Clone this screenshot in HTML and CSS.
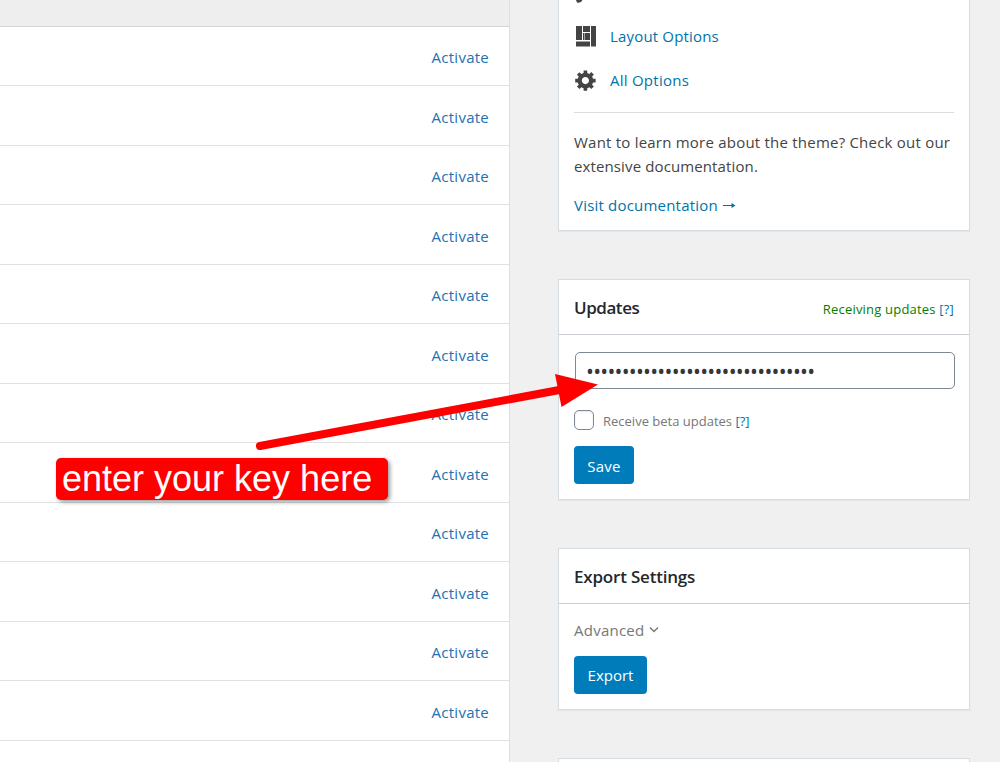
FILE: index.html
```html
<!DOCTYPE html>
<html lang="en">
<head>
<meta charset="utf-8">
<title>Theme options</title>
<link rel="stylesheet" href="styles.css">
</head>
<body>
<main class="page">
  <section class="table">
    <div class="table-head"></div>
    <div class="row"><a class="activate">Activate</a></div>
    <div class="row"><a class="activate">Activate</a></div>
    <div class="row"><a class="activate">Activate</a></div>
    <div class="row"><a class="activate">Activate</a></div>
    <div class="row"><a class="activate">Activate</a></div>
    <div class="row"><a class="activate">Activate</a></div>
    <div class="row"><a class="activate">Activate</a></div>
    <div class="row"><a class="activate">Activate</a></div>
    <div class="row"><a class="activate">Activate</a></div>
    <div class="row"><a class="activate">Activate</a></div>
    <div class="row"><a class="activate">Activate</a></div>
    <div class="row"><a class="activate">Activate</a></div>
    <div class="row"></div>
  </section>
  <aside class="side">
    <section class="panel options">
      <svg class="brush" width="24" height="4" viewBox="0 0 24 4"><path d="M2 0H8.500Q7 3.500 3 2.500Z" fill="#444"/></svg>
      <a class="option"><svg class="icon" width="24" height="24" viewBox="0 0 24 24"><path fill="#444" d="M2 2H8V16H2ZM9 2H16V8H9ZM9 9H10.500V16H9ZM11 9H16V16H11ZM17 2H22V22.500H17ZM2 17.500H16V22.500H2Z"/></svg><span class="link l-layout">Layout Options</span></a>
      <a class="option"><svg class="icon" width="24" height="24" viewBox="0 0 20 20"><path fill="#444" d="M18 12h-2.180c-.17.700-.440 1.350-.81 1.930l1.540 1.540-2.100 2.100-1.540-1.540c-.58.360-1.230.630-1.910.790V19H8v-2.180c-.68-.16-1.330-.43-1.910-.79l-1.540 1.540-2.120-2.120 1.540-1.540c-.36-.58-.63-1.230-.79-1.910H1V9.030h2.170c.160-.7.440-1.350.8-1.940L2.430 5.550l2.100-2.100 1.540 1.540c.58-.37 1.240-.64 1.930-.81V2h3v2.180c.68.160 1.330.430 1.910.79l1.540-1.540 2.120 2.120-1.540 1.540c.36.590.64 1.240.8 1.940H18V12zm-8.500 1.500c1.660 0 3-1.340 3-3s-1.340-3-3-3-3 1.340-3 3 1.340 3 3 3z"/></svg><span class="link l-all">All Options</span></a>
      <hr class="rule">
      <p class="copy"><span class="c1">Want to learn more about the theme? Check out our</span><br><span class="c2">extensive documentation.</span></p>
      <a class="link visit"><span class="l-visit">Visit documentation</span><svg class="arrow-icon" width="13" height="8" viewBox="0 0 13 8"><path d="M0 4.500H11" fill="none" stroke="#0073aa"/><path d="M8.500 2L12.500 4.500L8.500 7Z" fill="#0073aa"/></svg></a>
    </section>
    <section class="panel updates">
      <header class="panel-head"><h2 class="title t-up">Updates</h2><span class="status">Receiving updates <a class="help">[?]</a></span></header>
      <div class="key"><span class="dots">••••••••••••••••••••••••••••••••</span></div>
      <label class="beta"><span class="check"></span><span class="beta-text">Receive beta updates <a class="help">[?]</a></span></label>
      <button class="button save">Save</button>
    </section>
    <section class="panel export">
      <header class="panel-head"><h2 class="title t-ex">Export Settings</h2></header>
      <div class="advanced"><span class="adv-text">Advanced</span><svg width="10" height="8" viewBox="0 0 10 8"><path d="M1 1.500L5 5.500L9 1.500" fill="none" stroke="#777" stroke-width="1.400"/></svg></div>
      <button class="button exp">Export</button>
    </section>
    <section class="panel next"></section>
  </aside>
  <svg class="pointer" width="1000" height="762" viewBox="0 0 1000 762"><path d="M260 446L562 389.500" stroke="#f00" stroke-width="8" stroke-linecap="round"/><path d="M555 374L598 384.500L561.500 407Z" fill="#f00"/></svg>
  <div class="callout"><span class="callout-text">enter your key here</span></div>
</main>
</body>
</html>
```
FILE: styles.css
```css
* { box-sizing: border-box; }
body { margin: 0; background: #f0f0f0; font-family: "Open Sans", "Noto Sans", sans-serif; font-size: 15px; color: #444; }
.page { position: relative; display: flex; width: 1000px; height: 762px; overflow: hidden; }
.table { width: 510px; flex: none; background: #fff; border-right: 1px solid #dcdfe2; }
.table-head { height: 27px; background: #eee; border-bottom: 1px solid #d3d5d7; }
.row { height: 59.5px; border-bottom: 1px solid #e1e1e1; display: flex; justify-content: flex-end; align-items: center; padding: 3px 20px 0 0; }
.table-head + .row { height: 59px; padding-top: 2px; }
.activate { color: #2271b1; white-space: nowrap; letter-spacing: .25px; }
.side { width: 412px; margin-left: 48px; display: flex; flex-direction: column; gap: 48px; flex: none; }
.panel { background: #fff; border: 1px solid #d5dde3; box-shadow: 0 1px 1px rgba(0,0,0,.04); padding: 0 15px; flex: none; }
.options { height: 231px; border-top: 0; }
.brush { display: block; height: 4px; }
.option { display: flex; align-items: center; height: 44px; gap: 12px; }
.brush + .option { margin-top: 10px; }
.icon { flex: none; }
.link, .help { color: #0073aa; white-space: nowrap; }
.l-layout { letter-spacing: .17px; }
.l-all { letter-spacing: .25px; }
.l-visit { letter-spacing: .2px; }
.rule { margin: 10px 0 0; border: 0; border-top: 1px solid #ddd; }
.copy { margin: 17px 0 0; line-height: 24px; white-space: nowrap; }
.c1 { letter-spacing: .22px; }
.c2 { letter-spacing: .12px; }
.visit { display: flex; align-items: center; gap: 5px; margin-top: 15px; line-height: 24px; }
.updates { height: 221px; }
.panel-head { height: 55px; margin: 0 -15px; padding: 1px 15px 0; display: flex; align-items: center; justify-content: space-between; border-bottom: 1px solid #c9cfd4; }
.title { margin: 0; font-size: 17px; font-weight: 600; color: #23282d; white-space: nowrap; }
.t-up { letter-spacing: -.45px; }
.t-ex { letter-spacing: -.2px; }
.status { color: #008000; font-size: 13px; padding-top: 2px; white-space: nowrap; letter-spacing: .2px; }
.key { height: 37px; width: 380px; margin: 17px 0 0 1px; border: 1px solid #7e8993; border-radius: 5px; padding-left: 10px; display: flex; align-items: center; }
.dots { font-size: 21px; line-height: 20px; letter-spacing: -.76px; color: #32373c; white-space: nowrap; }
.beta { display: flex; align-items: center; gap: 9px; height: 20px; margin-top: 21px; }
.check { width: 20px; height: 20px; border: 1px solid #7e8993; border-radius: 5px; box-shadow: inset 0 1px 2px rgba(0,0,0,.1); }
.beta-text { color: #777; font-size: 13px; white-space: nowrap; padding-top: 2px; }
.button { display: block; height: 38px; margin: 16px 0 0; border: 0; border-radius: 4px; background: #007cba; color: #fff; font: 15px "Open Sans", sans-serif; padding: 1px 0 0; text-align: center; }
.save { width: 60px; letter-spacing: .2px; }
.exp { width: 73px; margin-top: 16px; padding: 0 0 1px; }
.export { height: 162px; }
.advanced { color: #777; display: flex; align-items: center; gap: 5px; height: 20px; margin-top: 16px; letter-spacing: .25px; }
.next { height: 60px; }
.pointer { position: absolute; left: 0; top: 0; }
.callout { position: absolute; left: 56px; top: 458px; width: 332px; height: 42px; border-radius: 5px; background: #f00; box-shadow: 2px 2px 4px rgba(0,0,0,.4); padding-left: 6px; display: flex; align-items: center; }
.callout-text { color: #fff; font: 36px/42px "Liberation Sans", Arial, sans-serif; white-space: nowrap; }
```
